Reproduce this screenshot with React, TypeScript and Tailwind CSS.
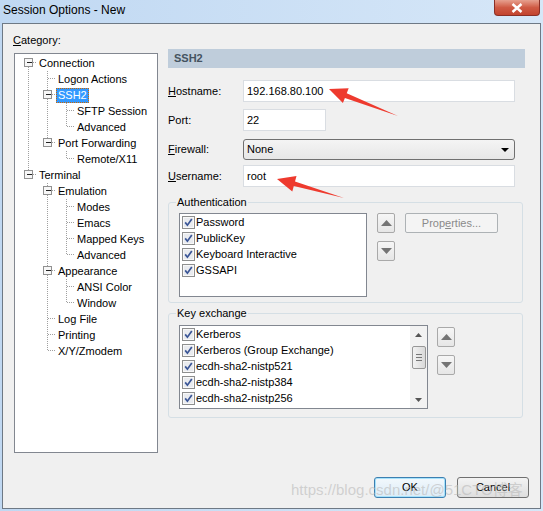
import React from 'react';

type Node = { label: string; level: number; kids: boolean };

const tree: Node[] = [
  { label: 'Connection', level: 0, kids: true },
  { label: 'Logon Actions', level: 1, kids: false },
  { label: 'SSH2', level: 1, kids: true },
  { label: 'SFTP Session', level: 2, kids: false },
  { label: 'Advanced', level: 2, kids: false },
  { label: 'Port Forwarding', level: 1, kids: true },
  { label: 'Remote/X11', level: 2, kids: false },
  { label: 'Terminal', level: 0, kids: true },
  { label: 'Emulation', level: 1, kids: true },
  { label: 'Modes', level: 2, kids: false },
  { label: 'Emacs', level: 2, kids: false },
  { label: 'Mapped Keys', level: 2, kids: false },
  { label: 'Advanced', level: 2, kids: false },
  { label: 'Appearance', level: 1, kids: true },
  { label: 'ANSI Color', level: 2, kids: false },
  { label: 'Window', level: 2, kids: false },
  { label: 'Log File', level: 1, kids: false },
  { label: 'Printing', level: 1, kids: false },
  { label: 'X/Y/Zmodem', level: 1, kids: false },
];

const hasNext = (i: number, k: number) => {
  for (let j = i + 1; j < tree.length; j++) {
    if (tree[j].level < k) return false;
    if (tree[j].level === k) return true;
  }
  return false;
};

const cx = (k: number) => 13 + 19 * k;

function TreeGuides({ i }: { i: number }) {
  const { level, kids } = tree[i];
  const dot = { stroke: '#a0a0a0', strokeDasharray: '1 1', shapeRendering: 'crispEdges' as const };
  const c = cx(level);
  return (
    <svg width={22 + 19 * level} height={16} className="shrink-0">
      {Array.from({ length: level }, (_, k) =>
        hasNext(i, k) ? <line key={k} x1={cx(k) + 0.5} x2={cx(k) + 0.5} y1={0} y2={16} {...dot} /> : null,
      )}
      {i > 0 && <line x1={c + 0.5} x2={c + 0.5} y1={0} y2={kids ? 3 : 8} {...dot} />}
      {hasNext(i, level) && <line x1={c + 0.5} x2={c + 0.5} y1={kids ? 12 : 8} y2={16} {...dot} />}
      <line x1={kids ? c + 5 : c + 1} x2={c + 10} y1={7.5} y2={7.5} {...dot} />
      {kids && (
        <g shapeRendering="crispEdges">
          <rect x={c - 3.5} y={3.5} width={8} height={8} fill="#f7f7f7" stroke="#919191" />
          <line x1={c - 1} x2={c + 4} y1={7.5} y2={7.5} stroke="#222" />
        </g>
      )}
    </svg>
  );
}

function Check() {
  return (
    <svg width="13" height="13" className="shrink-0">
      <rect x="0.5" y="0.5" width="12" height="12" fill="#e9ebef" stroke="#8e8f8f" shapeRendering="crispEdges" />
      <rect x="1.5" y="1.5" width="10" height="10" fill="none" stroke="#f8f8f8" shapeRendering="crispEdges" />
      <path d="M3.2 6.4 L5.4 9.2 L9.8 3" fill="none" stroke="#3a5596" strokeWidth="1.7" />
    </svg>
  );
}

function Tri({ up }: { up?: boolean }) {
  return (
    <svg width="11" height="6">
      <path d={up ? 'M0 6 L5.5 0 L11 6 Z' : 'M0 0 L5.5 6 L11 0 Z'} fill="#747474" />
    </svg>
  );
}

function ArrowBtn({ up }: { up?: boolean }) {
  return (
    <div className="flex h-[20px] w-[18px] items-center justify-center rounded-[2px] border border-[#a9a9a9] bg-gradient-to-b from-[#f6f6f6] to-[#e6e6e6]">
      <Tri up={up} />
    </div>
  );
}

function Item({ label }: { label: string }) {
  return (
    <div className="flex h-[16px] items-center pl-[2px]">
      <Check />
      <span className="ml-[1px] leading-[14px]">{label}</span>
    </div>
  );
}

function Field({ label, u, children }: { label: string; u?: boolean; children: React.ReactNode }) {
  return (
    <div className="flex items-center">
      <span className="w-[75px]">
        {u ? <span className="underline">{label[0]}</span> : label[0]}
        {label.slice(1)}
      </span>
      {children}
    </div>
  );
}

export default function App() {
  return (
    <div className="relative h-[511px] w-[543px] overflow-hidden bg-gradient-to-r from-[#c0d8f2] to-[#d6e7f8] font-['Liberation_Sans',Arial,sans-serif] text-[11px] text-black">
      <div className="flex h-[23px] items-start justify-between">
        <span className="ml-[3px] mt-[2px] text-[12px] leading-[16px]">Session Options - New</span>
        <div className="mr-[3px] flex h-[16px] w-[46px] items-center justify-center rounded-b-[4px] border border-t-0 border-[#8a2f26] bg-gradient-to-b from-[#e6a08f] via-[#cf5a44] to-[#c2432e]">
          <svg width="12" height="10">
            <path d="M1.5 1 L10.5 9 M10.5 1 L1.5 9" stroke="#fff" strokeWidth="2.4" />
          </svg>
        </div>
      </div>

      <div className="ml-[2px] flex h-[486px] w-[539px] flex-col border border-[#6e7985] bg-[#f0f0f0]">
        <div className="flex">
          <div className="ml-[11px] w-[144px]">
            <div className="-ml-[1px] mt-[9px] h-[14px] leading-[14px]">
              <span className="underline">C</span>ategory:
            </div>
            <div className="mt-[6px] h-[400px] border border-[#828790] bg-white pt-[1px]">
              {tree.map((n, i) => (
                <div key={i} className="flex h-[16px] items-center">
                  <TreeGuides i={i} />
                  {n.label === 'SSH2' ? (
                    <span className="border border-dotted border-[#cc6600] bg-[#3399ff] px-[1px] leading-[13px] text-white">
                      {n.label}
                    </span>
                  ) : (
                    <span className="whitespace-nowrap px-[2px] leading-[14px]">{n.label}</span>
                  )}
                </div>
              ))}
            </div>
          </div>

          <div className="ml-[10px] mt-[25px] w-[357px]">
            <div className="flex h-[19px] items-center bg-[#bfcddb] pl-[6px] font-bold text-[#45535f]">SSH2</div>

            <div className="mt-[12px]">
              <Field label="Hostname:" u>
                <div className="flex h-[22px] w-[272px] items-center border border-[#d9dde2] bg-white pl-[3px]">
                  192.168.80.100
                </div>
              </Field>
            </div>
            <div className="mt-[7px]">
              <Field label="Port:">
                <div className="flex h-[22px] w-[83px] items-center border border-[#d9dde2] bg-white pl-[3px]">22</div>
              </Field>
            </div>
            <div className="mt-[8px]">
              <Field label="Firewall:" u>
                <div className="flex h-[21px] w-[272px] items-center justify-between rounded-[3px] border border-[#707070] bg-gradient-to-b from-[#f4f4f4] to-[#e7e7e7] pl-[3px] pr-[5px]">
                  <span>None</span>
                  <svg width="8" height="4">
                    <path d="M0 0 L8 0 L4 4 Z" fill="#000" />
                  </svg>
                </div>
              </Field>
            </div>
            <div className="mt-[5px]">
              <Field label="Username:" u>
                <div className="flex h-[22px] w-[272px] items-center border border-[#d9dde2] bg-white pl-[3px]">root</div>
              </Field>
            </div>

            <fieldset className="mt-[8px] w-[355px] rounded-[3px] border border-[#d5dfe5]">
              <legend className="ml-[7px] px-[1px] leading-[14px]">Authentication</legend>
              <div className="flex items-start pb-[5px] pl-[10px] pt-[4px]">
                <div className="h-[84px] w-[188px] border border-[#828790] bg-white">
                  <Item label="Password" />
                  <Item label="PublicKey" />
                  <Item label="Keyboard Interactive" />
                  <Item label="GSSAPI" />
                </div>
                <div className="ml-[10px] flex flex-col gap-[8px]">
                  <ArrowBtn up />
                  <ArrowBtn />
                </div>
                <div className="ml-[10px] flex h-[20px] w-[93px] items-center justify-center rounded-[2px] border border-[#adb2b5] bg-[#f4f4f4] text-[#8a8a8a]">
                  Prop<span className="underline">e</span>rties...
                </div>
              </div>
            </fieldset>

            <fieldset className="mt-[3px] w-[355px] rounded-[3px] border border-[#d5dfe5]">
              <legend className="ml-[7px] px-[1px] leading-[14px]">Key exchange</legend>
              <div className="flex items-start pb-[8px] pl-[10px] pt-[5px]">
                <div className="flex h-[84px] w-[249px] border border-[#828790] bg-white">
                  <div className="flex-1">
                    <Item label="Kerberos" />
                    <Item label="Kerberos (Group Exchange)" />
                    <Item label="ecdh-sha2-nistp521" />
                    <Item label="ecdh-sha2-nistp384" />
                    <Item label="ecdh-sha2-nistp256" />
                  </div>
                  <div className="flex w-[17px] flex-col items-center bg-[#f2f2f2]">
                    <div className="flex h-[17px] items-center justify-center">
                      <svg width="7" height="4">
                        <path d="M0 4 L3.5 0 L7 4 Z" fill="#555" />
                      </svg>
                    </div>
                    <div className="mt-[3px] flex h-[23px] w-[14px] flex-col items-center justify-center gap-[2px] rounded-[2px] border border-[#979797] bg-gradient-to-r from-[#f2f2f2] to-[#d9d9d9]">
                      <div className="h-px w-[6px] bg-[#777]" />
                      <div className="h-px w-[6px] bg-[#777]" />
                      <div className="h-px w-[6px] bg-[#777]" />
                    </div>
                    <div className="flex-1" />
                    <div className="flex h-[17px] items-center justify-center">
                      <svg width="7" height="4">
                        <path d="M0 0 L7 0 L3.5 4 Z" fill="#555" />
                      </svg>
                    </div>
                  </div>
                </div>
                <div className="ml-[9px] mt-[2px] flex flex-col gap-[8px]">
                  <ArrowBtn up />
                  <ArrowBtn />
                </div>
              </div>
            </fieldset>
          </div>
        </div>

        <div className="mb-[10px] mr-[11px] mt-auto flex justify-end gap-[11px]">
          <div className="flex h-[21px] w-[72px] items-center justify-center rounded-[3px] border border-[#3c7fb1] bg-gradient-to-b from-[#f2f8fc] to-[#dcecf7] shadow-[inset_0_0_0_1px_#a6e2fb]">
            OK
          </div>
          <div className="flex h-[21px] w-[72px] items-center justify-center rounded-[3px] border border-[#707070] bg-gradient-to-b from-[#f3f3f3] to-[#dedede]">
            Cancel
          </div>
        </div>
      </div>

      <svg className="pointer-events-none absolute left-0 top-0" width="543" height="511">
        <polygon points="329,89 348.7,88.2 346.7,93.3 398,116 344.9,97.9 342.9,103" fill="#ee3a2e" />
        <polygon points="277,179 296.5,176 295,181.5 344,198 293.8,185.9 292.3,191.4" fill="#ee3a2e" />
      </svg>
      <div className="pointer-events-none absolute left-[291px] top-[481px] whitespace-nowrap font-['Liberation_Sans','Noto_Sans_CJK_SC',sans-serif] text-[15px] leading-[17px] text-[rgba(185,185,185,0.6)]">
        https://blog.csdn.net/@51CTO博客
      </div>
    </div>
  );
}
